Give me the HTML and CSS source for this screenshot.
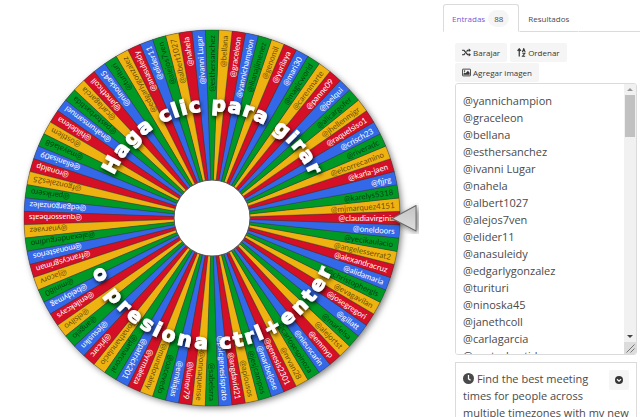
FILE: index.html
```html
<!DOCTYPE html>
<html lang="es">
<head>
<meta charset="utf-8">
<title>Ruleta</title>
<meta name="viewport" content="width=device-width, initial-scale=1">
<link rel="stylesheet" href="styles.css">
</head>
<body>
<main class="stage">
  <svg class="wheel" viewBox="0 0 443 417">
    <defs>
      <filter id="wheel-shadow" x="-10%" y="-10%" width="120%" height="120%">
        <feDropShadow dx="2" dy="2" stdDeviation="3" flood-color="#000" flood-opacity=".5"/>
      </filter>
      <filter id="text-shadow" x="-20%" y="-20%" width="140%" height="140%">
        <feDropShadow dx="1" dy="2" stdDeviation="2" flood-color="#000" flood-opacity=".9"/>
      </filter>
      <linearGradient id="pointer-fill" x1="0" y1="0" x2="0" y2="1">
        <stop offset="0" stop-color="#c4c4c4"/>
        <stop offset="1" stop-color="#dedede"/>
      </linearGradient>
    </defs>
    <circle cx="212" cy="218" r="188" fill="#555" filter="url(#wheel-shadow)"/>
    <g id="slices" transform="translate(212 218)"></g>
    <circle cx="212" cy="218" r="38" fill="#fff" stroke="#555" stroke-width="1"/>
    <g id="captions" class="caption" transform="translate(212 218)" filter="url(#text-shadow)"></g>
    <path d="M392 218.500L416 205.500V231Z" fill="url(#pointer-fill)" stroke="#666" stroke-width="1" stroke-linejoin="round" filter="url(#wheel-shadow)"/>
  </svg>
</main>
<aside class="panel">
  <nav class="tabs">
    <a class="tab tab-active" href="#entradas">Entradas <span class="count">88</span></a>
    <a class="tab" href="#resultados">Resultados</a>
  </nav>
  <div class="content">
    <div class="toolbar">
      <button class="button" type="button">
        <svg class="icon" viewBox="0 0 16 16"><path d="M0 4h3.500L10 12h3M0 12h3.500L5.500 9.500M8 6.500L10 4h3" fill="none" stroke="currentColor" stroke-width="2.200"/><path d="M12 .8L16 4l-4 3.200zM12 8.800L16 12l-4 3.200z" fill="currentColor"/></svg>
        Barajar
      </button>
      <button class="button" type="button">
        <svg class="icon" viewBox="0 0 16 16"><path d="M4 15V3M1 5l3-3.500L7 5" fill="none" stroke="currentColor" stroke-width="2.200"/><path d="M9.500 7l2.500-6 2.500 6M10.500 5h3M9.500 9.500h4.500L9.800 14.500h4.700" fill="none" stroke="currentColor" stroke-width="1.800"/></svg>
        Ordenar
      </button>
      <button class="button" type="button">
        <svg class="icon" viewBox="0 0 16 16"><rect x=".8" y="2" width="14.400" height="12" rx="1" fill="none" stroke="currentColor" stroke-width="1.600"/><circle cx="4.500" cy="5.500" r="1.400" fill="currentColor"/><path d="M2.500 12V10l2-2 2 1.500L10.500 5l3 3.500V12z" fill="currentColor"/></svg>
        Agregar imagen
      </button>
    </div>
    <div class="entries-box">
    <textarea class="entries" id="entries" aria-label="Entradas" spellcheck="false">@yannichampion
@graceleon
@bellana
@esthersanchez
@ivanni Lugar
@nahela
@albert1027
@alejos7ven
@elider11
@anasuleidy
@edgarlygonzalez
@turituri
@ninoska45
@janethcoll
@carlagarcia
@pastorbastida
@nahumsamuel
@hildelena
@ostilem
@mayala68
@elianisa09
@ronaldp
@fgonzales25
@pariksero
@edgargonzalez
@quassorbeats
@ynarvaez
@alexandergudino
@monasterios
@francysgriman
@jacorv
@mini80
@beldymag
@enilekcays
@elsilvo
@angelo
@jesuslkn
@jricarc
@jonathanulacio
@jamarcoral
@patrick201
@yrmaleza
@mundorainy
@oacevedo
@emiliajas
@luimer79
@onnaquense
@sabelsrra
@psicgenesisprato
@angdavid21
@apiousos
@jesjcampos
@maribeljose
@genesis2301
@nrvan28
@carlosespinoza
@nieuscarin
@emmyp
@alejortst
@marielsa
@gillatt
@josegregori
@evagavilan
@christophergls
@alidamaria
@alexandracruz
@angelesserrat2
@yecikaulacio
@oneldoors
@claudiavirginia
@mjmarquez4151
@karelys5318
@fjjrg
@karla-jaen
@elcorrecamino
@riveradc
@crisch23
@raquelsiso1
@jhellenmjgr
@alicargofer
@joelqui
@panne09
@carenmarte
@magicworld
@mari30
@yurilaya
@genomil
@ilianajimenez</textarea>
      <div class="scrollbar" aria-hidden="true">
        <span class="arrow arrow-up"></span>
        <span class="track"><span class="thumb"></span></span>
        <span class="arrow arrow-down"></span>
        <svg class="grip" viewBox="0 0 12 12"><path d="M2.500 10.500l8-8M6.500 10.500l4-4" fill="none" stroke="#777" stroke-width="1"/></svg>
      </div>
    </div>
    <section class="card">
      <p class="card-text"><svg class="clock" viewBox="0 0 16 16"><circle cx="8" cy="8" r="8" fill="currentColor"/><path d="M8 3v5.500l3 2" fill="none" stroke="#fff" stroke-width="1.800"/></svg> Find the best meeting times for people across multiple timezones with my new</p>
      <button class="card-toggle" type="button" aria-label="Mostrar">
        <svg class="chevron" viewBox="0 0 16 16"><circle cx="8" cy="8" r="8" fill="currentColor"/><path d="M4 6.500l4 4 4-4" fill="none" stroke="#fff" stroke-width="2.400"/></svg>
      </button>
    </section>
  </div>
</aside>
<script src="wheel.js"></script>
</body>
</html>
```
FILE: styles.css
```css
* {
  box-sizing: border-box;
}

body {
  margin: 0;
  height: 100vh;
  overflow: hidden;
  display: grid;
  grid-template-columns: minmax(0, 9fr) minmax(0, 4fr);
  align-items: start;
  background: #fff;
  color: #4a4a4a;
  font: 11px/17px "Open Sans", "Noto Sans", sans-serif;
}

.wheel {
  display: block;
  width: 100%;
}

.slice {
  stroke: #333;
  stroke-opacity: 0.6;
  stroke-width: 0.6;
}

.slice-name {
  font: 8px Lato, sans-serif;
  text-anchor: end;
}

.on-dark {
  fill: #fff;
}

.on-light {
  fill: #000;
  fill-opacity: 0.6;
}

.caption {
  font: bold 20px "DejaVu Sans", sans-serif;
  fill: #fff;
  stroke: #fff;
  stroke-width: 1;
  text-anchor: middle;
}

.panel {
  padding-top: 4px;
}

.tabs {
  display: flex;
  font-size: 8px;
}

.tabs::after {
  content: "";
  flex: 1;
  border-bottom: 1px solid #dbdbdb;
}

.tab {
  display: flex;
  align-items: center;
  gap: 3px;
  height: 28px;
  padding: 0 9px 0 8px;
  border: 1px solid transparent;
  border-bottom-color: #dbdbdb;
  color: #4a4a4a;
  text-decoration: none;
}

.tab-active {
  border-color: #dbdbdb;
  border-bottom-color: transparent;
  border-radius: 3px 3px 0 0;
  color: #7957d5;
}

.count {
  padding: 0 6px;
  border-radius: 9px;
  background: #f5f5f5;
  color: #4a4a4a;
}

.content {
  padding: 11px 3px 0 12px;
}

.toolbar {
  display: flex;
  flex-wrap: wrap;
  gap: 1px 3px;
}

.button {
  display: flex;
  align-items: center;
  gap: 2px;
  height: 19px;
  padding: 0 7px;
  border: 0;
  border-radius: 2px;
  background: #f5f5f5;
  color: #363636;
  font: 8px "Open Sans", "Noto Sans", sans-serif;
}

.icon {
  width: 9px;
  height: 9px;
}

.entries-box {
  display: flex;
  height: 272px;
  margin-top: 1px;
  border: 1px solid #dbdbdb;
  border-radius: 3px;
  overflow: hidden;
}

.entries {
  flex: 1;
  min-width: 0;
  padding: 8px 7px;
  border: 0;
  background: #fff;
  color: #4a4a4a;
  font: inherit;
  resize: none;
}

.scrollbar {
  display: flex;
  flex-direction: column;
  width: 12px;
  background: #f1f1f1;
}

.arrow {
  display: flex;
  align-items: center;
  justify-content: center;
  height: 11px;
}

.arrow::before {
  content: "";
  border: 3px solid transparent;
}

.arrow-up::before {
  border-top: 0;
  border-bottom-color: #999;
}

.arrow-down::before {
  border-bottom: 0;
  border-top-color: #444;
}

.track {
  flex: 1;
  padding: 0 1px;
}

.thumb {
  display: block;
  height: 18%;
  background: #c1c1c1;
}

.grip {
  height: 12px;
  background: #dcdcdc;
}

.card {
  display: flex;
  align-items: flex-start;
  margin-top: 7px;
  padding: 7px;
  border: 1px solid #dbdbdb;
}

.card-text {
  flex: 1;
  margin: 0 -20px 0 0;
}

.card-text::before {
  content: "";
  float: right;
  width: 20px;
  height: 20px;
}

.clock {
  width: 11px;
  height: 11px;
  vertical-align: -1px;
}

.card-toggle {
  display: flex;
  align-items: center;
  justify-content: center;
  width: 20px;
  height: 20px;
  padding: 0;
  border: 0;
  border-radius: 2px;
  background: #f5f5f5;
  color: #363636;
}

.chevron {
  width: 8px;
  height: 8px;
}
```
FILE: wheel.js
```js
const NS = "http://www.w3.org/2000/svg";
const COLORS = ["#d50f25", "#3369e8", "#009925", "#eeb211"];
const RADIUS = 188;
const FIRST_SLICE = 69;
const LETTER_GAP = 1;

function add(parent, tag, attrs, text) {
  const el = document.createElementNS(NS, tag);
  for (const key in attrs) el.setAttribute(key, attrs[key]);
  if (text) el.textContent = text;
  parent.appendChild(el);
  return el;
}

// One slice per entry, placed counter-clockwise from the first one.
function drawSlices() {
  const names = document.getElementById("entries").value.trim().split("\n");
  const group = document.getElementById("slices");
  const step = 360 / names.length;
  const half = (step * Math.PI) / 360;
  const x = RADIUS * Math.cos(half);
  const y = RADIUS * Math.sin(half);
  names.forEach((name, k) => {
    const index = (FIRST_SLICE - k + names.length) % names.length;
    const slice = add(group, "g", { transform: `rotate(${index * step})` });
    add(slice, "path", {
      class: "slice",
      d: `M0 0L${x} ${-y}A${RADIUS} ${RADIUS} 0 0 1 ${x} ${y}Z`,
      fill: COLORS[index % 4]
    });
    const tone = index % 4 < 2 ? "on-dark" : "on-light";
    add(slice, "text", { class: `slice-name ${tone}`, x: 183, y: 3 }, name);
  });
}

// Sets each letter on the circle; side is -1 for the upper arc, 1 for the lower.
function drawCaption(text, side, baseline, sweep) {
  const group = document.getElementById("captions");
  const ctx = document.createElement("canvas").getContext("2d");
  ctx.font = 'bold 20px "DejaVu Sans"';
  const widths = [...text].map((c) => ctx.measureText(c).width + LETTER_GAP);
  const total = widths.reduce((a, b) => a + b, 0);
  let at = -total / 2;
  [...text].forEach((c, i) => {
    const angle = ((at + widths[i] / 2) / total) * sweep;
    at += widths[i];
    if (c === " ") return;
    add(group, "text", {
      transform: `rotate(${-side * angle})`,
      y: side * baseline
    }, c);
  });
}

drawSlices();
drawCaption("Haga clic para girar", -1, 107, 134);
drawCaption("o presiona ctrl+enter", 1, 131, 134);
```
